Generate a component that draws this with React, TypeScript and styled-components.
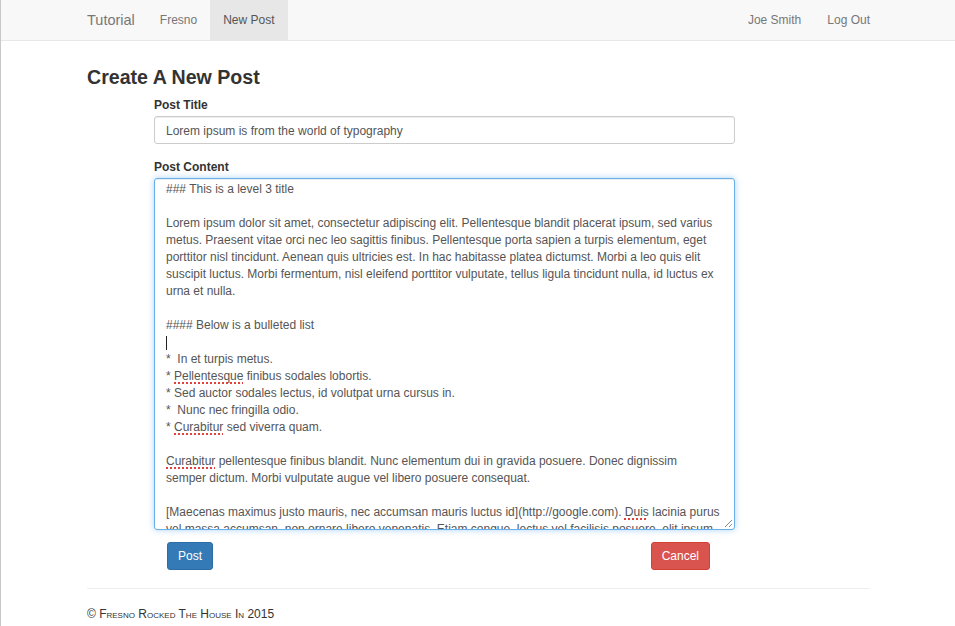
import React from "react";
import styled, { createGlobalStyle } from "styled-components";

const Global = createGlobalStyle`
  html, body { margin: 0; padding: 0; background: #fff; }
  body {
    font-family: "Liberation Sans", Arial, Helvetica, sans-serif;
    font-size: 12px;
    line-height: 17px;
    color: #333;
  }
  * { box-sizing: border-box; }
`;

const Page = styled.div`
  min-height: 626px;
  border-left: 1px solid #c9c9c9;
`;

const Navbar = styled.nav`
  height: 41px;
  background: #f8f8f8;
  border-bottom: 1px solid #e7e7e7;
`;

const NavInner = styled.div`
  width: 783px;
  margin-left: 86px;
  height: 40px;
  display: flex;
  align-items: stretch;
  justify-content: space-between;
`;

const NavGroup = styled.div<{ $right?: boolean }>`
  display: flex;
  align-items: stretch;
  margin-right: ${(p) => (p.$right ? "-13px" : "0")};
`;

const Brand = styled.a`
  display: flex;
  align-items: center;
  padding-right: 12px;
  font-size: 14.5px;
  color: #777;
  text-decoration: none;
`;

const NavLink = styled.a<{ $active?: boolean }>`
  display: flex;
  align-items: center;
  padding: 0 13px;
  font-size: 12px;
  color: ${(p) => (p.$active ? "#555" : "#777")};
  background: ${(p) => (p.$active ? "#e7e7e7" : "transparent")};
  text-decoration: none;
`;

const Container = styled.main`
  width: 783px;
  margin-left: 86px;
`;

const Heading = styled.h2`
  margin: 24px 0 0;
  font-size: 19.6px;
  line-height: 24px;
  font-weight: 700;
  color: #333;
`;

const Form = styled.form`
  width: 581px;
  margin: 8px 0 0 67px;
  display: flex;
  flex-direction: column;
`;

const Label = styled.label<{ $gap?: number }>`
  display: block;
  font-weight: 700;
  font-size: 12px;
  line-height: 17px;
  margin-top: ${(p) => p.$gap ?? 0}px;
  margin-bottom: 2px;
  color: #333;
`;

const TitleInput = styled.input`
  display: block;
  width: 100%;
  height: 28px;
  padding: 5px 11px 3px;
  font-family: inherit;
  font-size: 12px;
  color: #555;
  border: 1px solid #ccc;
  border-radius: 3px;
  box-shadow: inset 0 1px 1px rgba(0, 0, 0, 0.075);
  outline: none;
`;

const Editor = styled.div`
  position: relative;
  height: 352px;
  overflow: hidden;
  padding: 2px 10px 0 11px;
  font-size: 12px;
  line-height: 17px;
  color: #555;
  border: 1px solid #66afe9;
  border-radius: 3px;
  box-shadow: inset 0 1px 1px rgba(0, 0, 0, 0.075),
    0 0 6px rgba(102, 175, 233, 0.55);
`;

const Line = styled.div`
  height: 17px;
  white-space: pre;
`;

const Misspelled = styled.span`
  text-decoration: underline dotted #e0413a;
  text-decoration-thickness: 2px;
  text-underline-offset: 2px;
`;

const Caret = styled.span`
  display: inline-block;
  width: 1px;
  height: 14px;
  margin-top: 2px;
  background: #222;
`;

const Grip = styled.svg`
  position: absolute;
  right: 1px;
  bottom: 1px;
`;

const ButtonRow = styled.div`
  display: flex;
  justify-content: space-between;
  padding: 0 25px 0 13px;
  margin-top: 12px;
`;

const Button = styled.button<{ $variant: "primary" | "danger" }>`
  height: 28px;
  padding: 0 10px;
  font-family: inherit;
  font-size: 12px;
  color: #fff;
  border-radius: 3px;
  cursor: pointer;
  background: ${(p) => (p.$variant === "primary" ? "#337ab7" : "#d9534f")};
  border: 1px solid ${(p) => (p.$variant === "primary" ? "#2e6da4" : "#d43f3a")};
`;

const Rule = styled.hr`
  margin: 18px 0 0;
  border: 0;
  border-top: 1px solid #eee;
`;

const Footer = styled.footer`
  margin-top: 17px;
  font-size: 12px;
  line-height: 17px;
  font-variant: small-caps;
  color: #333;
`;

const Bad = ({ children }: { children: string }) => <Misspelled>{children}</Misspelled>;

const lines: React.ReactNode[] = [
  "### This is a level 3 title",
  "",
  "Lorem ipsum dolor sit amet, consectetur adipiscing elit. Pellentesque blandit placerat ipsum, sed varius",
  "metus. Praesent vitae orci nec leo sagittis finibus. Pellentesque porta sapien a turpis elementum, eget",
  "porttitor nisl tincidunt. Aenean quis ultricies est. In hac habitasse platea dictumst. Morbi a leo quis elit",
  "suscipit luctus. Morbi fermentum, nisl eleifend porttitor vulputate, tellus ligula tincidunt nulla, id luctus ex",
  "urna et nulla.",
  "",
  "#### Below is a bulleted list",
  <Caret key="caret" />,
  "*  In et turpis metus.",
  <>* <Bad>Pellentesque</Bad> finibus sodales lobortis.</>,
  "* Sed auctor sodales lectus, id volutpat urna cursus in.",
  "*  Nunc nec fringilla odio.",
  <>* <Bad>Curabitur</Bad> sed viverra quam.</>,
  "",
  <><Bad>Curabitur</Bad> pellentesque finibus blandit. Nunc elementum dui in gravida posuere. Donec dignissim</>,
  "semper dictum. Morbi vulputate augue vel libero posuere consequat.",
  "",
  <>[Maecenas maximus justo mauris, nec accumsan mauris luctus id](http://google.com). <Bad>Duis</Bad> lacinia purus</>,
  "vel massa accumsan, non ornare libero venenatis. Etiam congue, lectus vel facilisis posuere, elit ipsum",
];

export default function App() {
  return (
    <Page>
      <Global />
      <Navbar>
        <NavInner>
          <NavGroup>
            <Brand href="#">Tutorial</Brand>
            <NavLink href="#">Fresno</NavLink>
            <NavLink href="#" $active>New Post</NavLink>
          </NavGroup>
          <NavGroup $right>
            <NavLink href="#">Joe Smith</NavLink>
            <NavLink href="#">Log Out</NavLink>
          </NavGroup>
        </NavInner>
      </Navbar>
      <Container>
        <Heading>Create A New Post</Heading>
        <Form onSubmit={(e) => e.preventDefault()}>
          <Label htmlFor="title">Post Title</Label>
          <TitleInput id="title" defaultValue="Lorem ipsum is from the world of typography" />
          <Label $gap={15}>Post Content</Label>
          <Editor role="textbox" aria-multiline="true">
            {lines.map((l, i) => (
              <Line key={i}>{l}</Line>
            ))}
            <Grip width="9" height="9" viewBox="0 0 9 9">
              <line x1="1" y1="8" x2="8" y2="1" stroke="#888" strokeWidth="1" />
              <line x1="5" y1="8" x2="8" y2="5" stroke="#888" strokeWidth="1" />
            </Grip>
          </Editor>
          <ButtonRow>
            <Button type="submit" $variant="primary">Post</Button>
            <Button type="button" $variant="danger">Cancel</Button>
          </ButtonRow>
        </Form>
        <Rule />
        <Footer>© Fresno Rocked The House In 2015</Footer>
      </Container>
    </Page>
  );
}
